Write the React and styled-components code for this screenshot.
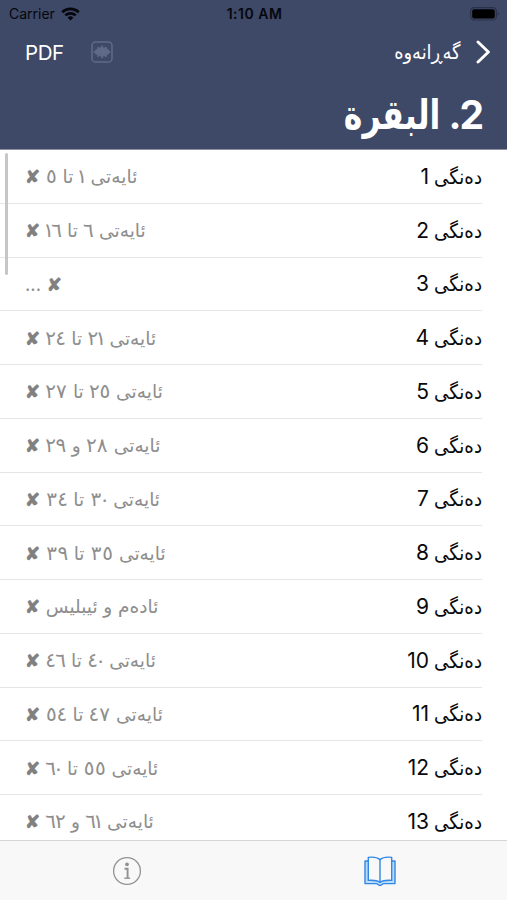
import React from 'react'
import styled, { createGlobalStyle } from 'styled-components'

const rows = [
  'ئایەتی ١ تا ٥ ✘',
  'ئایەتی ٦ تا ١٦ ✘',
  '✘ ...',
  'ئایەتی ٢١ تا ٢٤ ✘',
  'ئایەتی ٢٥ تا ٢٧ ✘',
  'ئایەتی ٢٨ و ٢٩ ✘',
  'ئایەتی ٣٠ تا ٣٤ ✘',
  'ئایەتی ٣٥ تا ٣٩ ✘',
  'ئادەم و ئیبلیس ✘',
  'ئایەتی ٤٠ تا ٤٦ ✘',
  'ئایەتی ٤٧ تا ٥٤ ✘',
  'ئایەتی ٥٥ تا ٦٠ ✘',
  'ئایەتی ٦١ و ٦٢ ✘',
]

// side margins that turn the fixed width digits into proportional ones
const digitMargin = {
  '٠': -2.4,
  '١': -2.4,
  '٢': -0.4,
  '٣': 0.6,
  '٤': -0.4,
  '٥': 0.2,
  '٦': -0.5,
  '٧': 0.4,
  '٨': 0.5,
  '٩': -0.2,
}

export default function App() {
  return (
    <Screen>
      <GlobalStyle />
      <Header>
        <StatusBar>
          <Carrier>
            Carrier
            <WifiIcon />
          </Carrier>
          <Clock>1:10 AM</Clock>
          <BatteryIcon />
        </StatusBar>
        <NavBar>
          <Pdf>PDF</Pdf>
          <WaveIcon />
          <Back dir="rtl">
            <ChevronIcon />
            <BackLabel>گەڕانەوە</BackLabel>
          </Back>
        </NavBar>
        <Title dir="rtl">2. <TitleWord>البقرة</TitleWord></Title>
      </Header>

      <List>
        {rows.map((detail, index) => (
          <Row key={index} dir="rtl">
            <Name>
              <NameWord>دەنگی</NameWord>
              <span>{index + 1}</span>
            </Name>
            <Detail>
              {[...detail].map((char, i) => {
                if (char === '✘') return <Cross key={i}>{char}</Cross>
                if (char in digitMargin) return <Digit key={i} $margin={digitMargin[char]}>{char}</Digit>
                return char
              })}
            </Detail>
          </Row>
        ))}
        <ScrollThumb />
      </List>

      <TabBar>
        <Tab><InfoIcon /></Tab>
        <Tab><BookIcon /></Tab>
      </TabBar>
    </Screen>
  )
}

function WifiIcon() {
  return (
    <svg width="19" height="14" viewBox="0 0 19 14" fill="none" stroke="#05070c" strokeWidth="2.6">
      <path d="M1.2 5.2a12 12 0 0 1 16.6 0" />
      <path d="M4.3 8.4a7.6 7.6 0 0 1 10.4 0" />
      <path d="M9.5 13.6 6.6 10.7a4.2 4.2 0 0 1 5.8 0z" fill="#05070c" stroke="none" />
    </svg>
  )
}

function BatteryIcon() {
  return (
    <svg width="30" height="14" viewBox="0 0 30 14">
      <rect x="0.6" y="0.6" width="25.8" height="12.4" rx="3.6" fill="none" stroke="#2a314b" strokeWidth="1.2" />
      <rect x="2.2" y="2.2" width="22.6" height="9.2" rx="2" fill="#000" />
      <path d="M27.6 4.8q2.6 2 0 4z" fill="#2a314b" />
    </svg>
  )
}

function WaveIcon() {
  return (
    <svg width="22" height="22" viewBox="0 0 22 22" fill="none" stroke="#606a89" strokeLinecap="round">
      <rect x="1" y="1" width="20" height="20" rx="3.6" strokeWidth="1.5" />
      <path d="M3.4 10.9h15.2" strokeWidth="2" />
      <path d="M5.2 9v3.8M7.2 6.8v8.2M9.2 7.2v7.4M11.1 5.4v11M13 7.2v7.4M15 6.8v8.2M16.9 9v3.8" strokeWidth="1.9" />
    </svg>
  )
}

function ChevronIcon() {
  return (
    <svg width="15" height="24" viewBox="0 0 15 24" fill="none" stroke="#fff" strokeWidth="2.9" strokeLinecap="round" strokeLinejoin="round">
      <path d="M2 2 12.4 12 2 22" />
    </svg>
  )
}

function InfoIcon() {
  return (
    <svg width="30" height="30" viewBox="0 0 30 30" fill="none" stroke="#929292">
      <circle cx="15" cy="15" r="13.4" strokeWidth="1.3" />
      <circle cx="15" cy="8.3" r="1.9" fill="#929292" stroke="none" />
      <path d="M12.5 12.7h3.1v9.3" strokeWidth="1.9" />
      <path d="M12.3 22.2h5.8" strokeWidth="1.4" />
    </svg>
  )
}

function BookIcon() {
  return (
    <svg width="32" height="30" viewBox="0 0 32 30" stroke="#3287e3" strokeWidth="1.4" strokeLinejoin="round">
      <path d="M4.3 5H1v22.6h11.5c1 0 1.6 1.8 3.5 1.8s2.5-1.8 3.5-1.8H31V5h-3.3" fill="#b9dcfb" />
      <path d="M4.3 1.4q8-1 11.7 2.2 3.7-3.2 11.7-2.2v23q-8-.6-11.7 2-3.7-2.6-11.7-2z" fill="#f8f8f8" />
      <path d="M16 3.6v22.8" />
    </svg>
  )
}

const GlobalStyle = createGlobalStyle`
  * {
    box-sizing: border-box;
  }
  body {
    margin: 0;
    background: #fff;
    font-family: Inter, 'DejaVu Sans', sans-serif;
  }
  svg {
    display: block;
    flex: none;
  }
`

const Screen = styled.div`
  display: flex;
  flex-direction: column;
  width: 507px;
  height: 900px;
  overflow: hidden;
`

const Header = styled.header`
  flex: none;
  height: 150px;
  background: #3e4867;
  border-bottom: 1px solid #8d8fa3;
  color: #fff;
`

const StatusBar = styled.div`
  display: grid;
  grid-template-columns: 1fr auto 1fr;
  align-items: center;
  height: 27px;
  padding: 0 7px 0 9px;
  color: #05070c;

  > svg {
    justify-self: end;
  }
`

const Carrier = styled.div`
  display: flex;
  align-items: center;
  gap: 6px;
  font-size: 14px;
`

const Clock = styled.div`
  font-size: 14px;
  font-weight: 600;
  letter-spacing: 0.5px;
`

const NavBar = styled.div`
  display: flex;
  align-items: center;
  height: 50px;
  padding: 0 16px 0 25px;
`

const Pdf = styled.span`
  width: 66px;
  font-size: 20.5px;
  letter-spacing: -0.4px;
`

const Back = styled.div`
  display: flex;
  align-items: center;
  gap: 16px;
  margin-left: auto;
  font-size: 20px;
`

const BackLabel = styled.span`
  transform: scaleX(0.89);
  transform-origin: right;
`

const Title = styled.h1`
  margin: 0;
  padding: 0 25px;
  font-size: 39px;
  font-weight: 700;
  line-height: 75px;
  letter-spacing: -2px;
`

const TitleWord = styled.span`
  display: inline-block;
  margin-right: 1px;
  font-size: 41px;
  letter-spacing: 0;
  transform: scaleX(0.77);
  transform-origin: right;
`

const List = styled.main`
  position: relative;
  flex: 1;
  min-height: 0;
  overflow: hidden;
`

const Row = styled.div`
  display: flex;
  align-items: center;
  justify-content: space-between;
  height: 53.75px;
  margin-right: 25px;
  padding-left: 25px;
  border-bottom: 1px solid #e6e6e6;
`

const Name = styled.span`
  display: flex;
  align-items: baseline;
  gap: 6px;
  font-size: 21px;
  color: #0a0a0a;
`

const NameWord = styled.span`
  width: 47px;
  font-size: 20px;
  white-space: nowrap;
  transform: scaleX(0.91);
  transform-origin: right;
`

const Detail = styled.span`
  font-size: 18.6px;
  word-spacing: 0.4px;
  color: #8e8e8e;
`

const Digit = styled.span`
  margin: 0 ${props => props.$margin}px;
  font-size: 20px;
`

const Cross = styled.span`
  font-size: 18px;
  font-weight: 700;
  color: #808080;
  -webkit-text-stroke: 0.7px #808080;
`

// floats over the rows like the native scroll indicator
const ScrollThumb = styled.div`
  position: absolute;
  top: 3px;
  left: 5px;
  width: 3px;
  height: 122px;
  border-radius: 2px;
  background: #c6c6c6;
`

const TabBar = styled.nav`
  display: grid;
  grid-template-columns: 1fr 1fr;
  flex: none;
  height: 60px;
  background: #f8f8f8;
  border-top: 1px solid #d5d5d5;
`

const Tab = styled.div`
  display: flex;
  align-items: center;
  justify-content: center;
`
